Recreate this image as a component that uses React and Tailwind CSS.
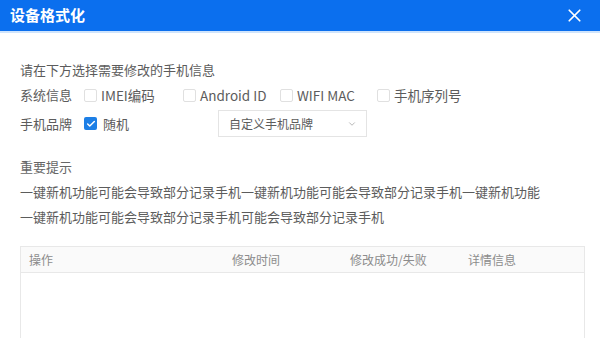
import { Check, ChevronDown, X } from 'lucide-react';

const font = { fontFamily: '"Noto Sans CJK SC", "Noto Sans", sans-serif' };

function Box({ checked }) {
  if (checked) {
    return (
      <span className="flex h-[13px] w-[13px] items-center justify-center rounded-[2px] bg-[#1d7fe6]">
        <Check size={10} strokeWidth={3.5} className="text-white" />
      </span>
    );
  }
  return <span className="h-[13px] w-[13px] rounded-[2px] border border-[#e0e0e0] bg-white" />;
}

function Option({ label, checked, width }) {
  return (
    <div className={`flex items-center gap-[4px] ${width}`}>
      <Box checked={checked} />
      <span className="text-[13.5px] text-[#5c5c5c]">{label}</span>
    </div>
  );
}

export default function App() {
  const columns = ['操作', '修改时间', '修改成功/失败', '详情信息'];

  return (
    <div className="h-[338px] w-[600px] overflow-hidden bg-white" style={font}>
      <div className="flex h-[31px] items-center justify-between bg-[#0b6fee] pl-[10px] pr-[15px]">
        <h1 className="text-[15px] font-bold text-white">设备格式化</h1>
        <X size={21} strokeWidth={2} className="text-white" />
      </div>
      <div className="h-[2px] bg-[#cfe4fc]" />

      <div className="px-5">
        <p className="mt-[27px] h-5 text-[13px] leading-5 text-[#5c5c5c]">请在下方选择需要修改的手机信息</p>

        <div className="mt-[5px] flex h-5 items-center">
          <span className="w-[64px] text-[13px] text-[#5c5c5c]">系统信息</span>
          <Option label="IMEI编码" width="w-[99px]" />
          <Option label="Android ID" width="w-[97px]" />
          <Option label="WIFI MAC" width="w-[97px]" />
          <Option label="手机序列号" />
        </div>

        <div className="mt-[5px] flex h-[27px] items-center">
          <span className="w-[64px] text-[13px] text-[#5c5c5c]">手机品牌</span>
          <div className="flex w-[134px] items-center gap-[6px]">
            <Box checked />
            <span className="text-[13px] text-[#5c5c5c]">随机</span>
          </div>
          <div className="flex h-[27px] w-[149px] items-center justify-between border border-[#e4e4e4] pl-[10px] pr-[9px]">
            <span className="text-[12px] text-[#5c5c5c]">自定义手机品牌</span>
            <ChevronDown size={10} className="text-[#aaa]" />
          </div>
        </div>

        <p className="mt-[20px] h-5 text-[13px] leading-5 text-[#666]">重要提示</p>
        <p className="mt-[2px] text-[13px] leading-[25px] text-[#5c5c5c]">
          一键新机功能可能会导致部分记录手机一键新机功能可能会导致部分记录手机一键新机功能
        </p>
        <p className="text-[13px] leading-[25px] text-[#5c5c5c]">
          一键新机功能可能会导致部分记录手机可能会导致部分记录手机
        </p>

        <div className="mt-[17px] h-[120px] w-[565px] border border-[#e8e8e8]">
          <div className="grid h-[26px] grid-cols-[203px_118px_118px_1fr] items-center border-b border-[#e8e8e8] bg-[#fafafa]">
            {columns.map((c) => (
              <span key={c} className="pl-[8px] text-[12px] text-[#8c8c8c]">
                {c}
              </span>
            ))}
          </div>
        </div>
      </div>
    </div>
  );
}
